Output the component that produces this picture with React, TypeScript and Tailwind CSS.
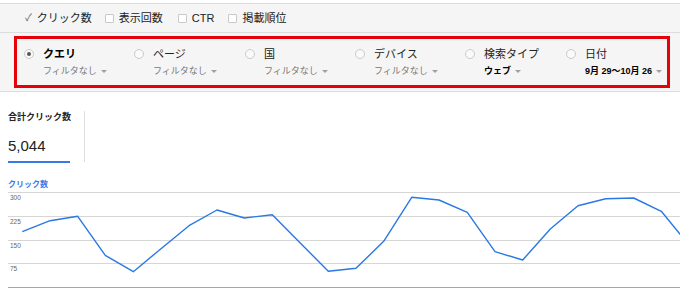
import React from "react";

const options = [
  { title: "クエリ", sub: "フィルタなし", selected: true, subBold: false, w: "w-[110px]" },
  { title: "ページ", sub: "フィルタなし", selected: false, subBold: false, w: "w-[111px]" },
  { title: "国", sub: "フィルタなし", selected: false, subBold: false, w: "w-[110px]" },
  { title: "デバイス", sub: "フィルタなし", selected: false, subBold: false, w: "w-[110px]" },
  { title: "検索タイプ", sub: "ウェブ", selected: false, subBold: true, w: "w-[101px]" },
  { title: "日付", sub: "9月 29〜10月 26", selected: false, subBold: true, w: "w-[100px]" },
];

const pts: [number, number][] = [
  [22.3, 232.7], [50, 221.7], [77.7, 217.3], [105.3, 256.3], [133.3, 272.7],
  [161, 249.7], [189, 226.7], [217, 211], [244.3, 219], [272.3, 215.7],
  [300, 243.7], [328.3, 272.3], [356, 269.3], [383.7, 242.3], [411.7, 198.3],
  [439, 201], [467.3, 213.3], [495, 252.7], [522.7, 261], [550.3, 230],
  [578, 206.7], [605.7, 199.7], [633.7, 199], [661.3, 212.3], [689, 246],
];

function Caret() {
  return (
    <span className="inline-block w-0 h-0 ml-[4px] border-l-[3px] border-r-[3px] border-t-[3px] border-l-transparent border-r-transparent border-t-[#a0a0a0] align-middle" />
  );
}

function Checkbox() {
  return <span className="inline-block w-[9px] h-[9px] border border-[#c9c9c9] bg-white rounded-[1px]" />;
}

export default function App() {
  const grid = [
    { y: 3.5, label: "300" },
    { y: 27.5, label: "225" },
    { y: 51.5, label: "150" },
    { y: 74.5, label: "75" },
  ];
  return (
    <div className="w-[680px] h-[290px] bg-white overflow-hidden font-['Liberation_Sans','Noto_Sans_CJK_JP',sans-serif] text-[#222]">
      <div className="pt-[3px]">
        <div className="bg-[#f5f5f5] border-t border-b border-[#dcdcdc]">
          <div className="h-[29px] flex items-center pl-[25px] border-b border-[#dcdcdc] text-[11px] leading-[14px]">
            <span className="text-[10px] text-[#555] mr-[5px]">✓</span>
            <span>クリック数</span>
            <span className="ml-[13px] mr-[5px] flex items-center"><Checkbox /></span>
            <span>表示回数</span>
            <span className="ml-[15px] mr-[5px] flex items-center"><Checkbox /></span>
            <span>CTR</span>
            <span className="ml-[14px] mr-[5px] flex items-center"><Checkbox /></span>
            <span>掲載順位</span>
          </div>
          <div className="pt-[3px] pb-[3px] pl-[14px]">
            <div className="w-[656px] h-[52px] border-[3px] border-[#e6000a] flex items-start pl-[7px] pt-[7px]">
              {options.map((o) => (
                <div key={o.title} className={`${o.w} flex items-start shrink-0`}>
                  <span className="mt-[3px] w-[10px] h-[10px] rounded-full border border-[#cacaca] bg-[#fafafa] flex items-center justify-center shrink-0">
                    {o.selected && <span className="w-[4px] h-[4px] rounded-full bg-[#555]" />}
                  </span>
                  <div className="ml-[9px] flex flex-col">
                    <span className={`text-[11px] leading-[16px] whitespace-nowrap ${o.selected ? "font-bold text-black" : "text-[#222]"}`}>
                      {o.title}
                    </span>
                    <span className={`mt-[3px] text-[9px] leading-[12px] whitespace-nowrap flex items-center ${o.subBold ? "font-bold text-black" : "text-[#777]"}`}>
                      {o.sub}
                      <Caret />
                    </span>
                  </div>
                </div>
              ))}
            </div>
          </div>
        </div>
      </div>

      <div className="mt-[19px] pl-[8px] flex items-start">
        <div className="w-[62px] flex flex-col">
          <span className="text-[9px] leading-[12px] font-bold whitespace-nowrap text-[#222]">合計クリック数</span>
          <span className="mt-[14px] text-[15px] leading-[18px] text-[#222]">5,044</span>
          <span className="mt-[6px] h-[2px] w-[62px] bg-[#3b78e7]" />
        </div>
        <div className="ml-[14px] w-px h-[51px] bg-[#dedede]" />
      </div>

      <div className="mt-[17px] pl-[8px] h-[10px] text-[8px] leading-[10px] font-bold text-[#3b78e7]">クリック数</div>

      <svg width="680" height="99" viewBox="0 1 680 99" className="block">
        {grid.map((g) => (
          <g key={g.label}>
            <line x1="8" x2="680" y1={g.y} y2={g.y} stroke="#d6d6d6" strokeWidth="1" />
            <text x="10" y={g.y + 7} fontSize="6.5" fill="#666" fontFamily="Liberation Sans, sans-serif">
              {g.label}
            </text>
          </g>
        ))}
        <line x1="8" x2="680" y1="98.5" y2="98.5" stroke="#a6a6a6" strokeWidth="1" />
        <polyline
          points={pts.map(([x, y]) => `${x},${y - 190}`).join(" ")}
          fill="none"
          stroke="#2a78e4"
          strokeWidth="1.4"
          strokeLinejoin="round"
        />
      </svg>
    </div>
  );
}
